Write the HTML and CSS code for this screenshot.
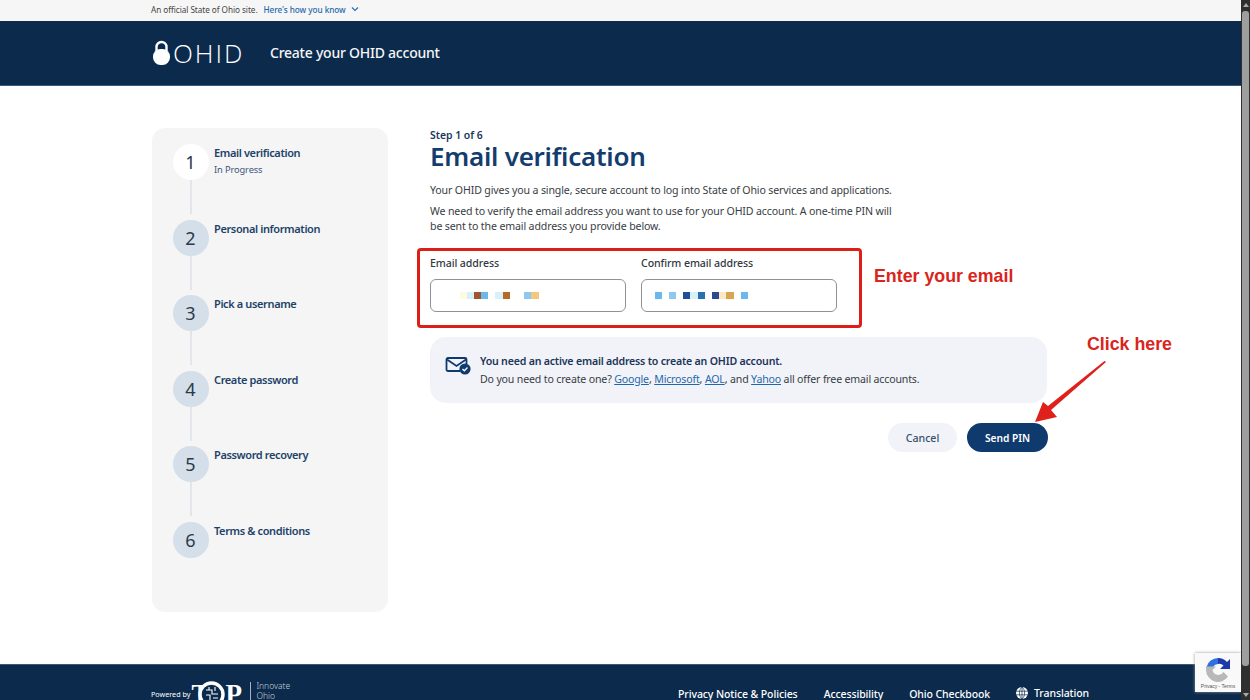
FILE: index.html
```html
<!DOCTYPE html>
<html lang="en">
<head>
<meta charset="utf-8">
<title>Create your OHID account</title>
<link rel="stylesheet" href="styles.css">
</head>
<body>
<div class="viewport">
  <div class="page">
    <div class="banner">
      <span class="banner-text">An official State of Ohio site.</span>
      <a class="banner-link">Here's how you know</a>
      <svg class="chevron" width="8" height="6" viewBox="0 0 8 6"><path d="M1 1.500 4 4.500 7 1.500" fill="none" stroke="#2a6fb0" stroke-width="1.200"/></svg>
    </div>
    <header class="header">
      <div class="logo">
        <svg class="lock" width="19" height="26" viewBox="0 0 19 26"><path d="M4.500 11V7a5 5 0 0 1 10 0v4" fill="none" stroke="#fff" stroke-width="2.400"/><rect x="1" y="9" width="17" height="16" rx="7.500" fill="#fff"/></svg>
        <span class="logo-text">OHID</span>
      </div>
      <div class="header-title">Create your OHID account</div>
    </header>
    <main class="main">
      <aside class="stepper">
        <div class="step step-current"><div class="step-marker"><div class="circle">1</div><div class="line"></div></div><div class="step-label"><div class="step-name">Email verification</div><div class="step-status">In Progress</div></div></div>
        <div class="step"><div class="step-marker"><div class="circle">2</div><div class="line"></div></div><div class="step-label"><div class="step-name">Personal information</div></div></div>
        <div class="step"><div class="step-marker"><div class="circle">3</div><div class="line"></div></div><div class="step-label"><div class="step-name">Pick a username</div></div></div>
        <div class="step"><div class="step-marker"><div class="circle">4</div><div class="line"></div></div><div class="step-label"><div class="step-name">Create password</div></div></div>
        <div class="step"><div class="step-marker"><div class="circle">5</div><div class="line"></div></div><div class="step-label"><div class="step-name">Password recovery</div></div></div>
        <div class="step"><div class="step-marker"><div class="circle">6</div></div><div class="step-label"><div class="step-name">Terms &amp; conditions</div></div></div>
      </aside>
      <section class="content">
        <div class="step-count">Step 1 of 6</div>
        <h1 class="title">Email verification</h1>
        <p class="intro">Your OHID gives you a single, secure account to log into State of Ohio services and applications.</p>
        <p class="intro intro-wrap">We need to verify the email address you want to use for your OHID account. A one-time PIN will be sent to the email address you provide below.</p>
        <div class="fields">
          <div class="field">
            <label class="field-label">Email address</label>
            <div class="input mask-a">
              <span class="c c1"></span><span class="c c2"></span><span class="c c3"></span><span class="c c4"></span><span class="c"></span><span class="c c2"></span><span class="c c5"></span><span class="c"></span><span class="c"></span><span class="c c6"></span><span class="c c7"></span>
            </div>
          </div>
          <div class="field">
            <label class="field-label">Confirm email address</label>
            <div class="input mask-b">
              <span class="c c4"></span><span class="c"></span><span class="c c6"></span><span class="c"></span><span class="c c8"></span><span class="c c2"></span><span class="c c9"></span><span class="c"></span><span class="c c10"></span><span class="c c11"></span><span class="c c12"></span><span class="c"></span><span class="c c4"></span>
            </div>
          </div>
        </div>
        <div class="callout">
          <svg class="mail-icon" width="26" height="18" viewBox="0 0 26 18"><path d="M15 14H3a1.500 1.500 0 0 1-1.500-1.500V2.500A1.500 1.500 0 0 1 3 1h17a1.500 1.500 0 0 1 1.500 1.500V7" fill="none" stroke="#0f3a6e" stroke-width="1.800"/><path d="M2 2.500 11.500 9 21 2.500" fill="none" stroke="#0f3a6e" stroke-width="1.800"/><circle cx="20" cy="12" r="5.600" fill="#0f3a6e"/><path d="M17.500 12l1.800 1.800 3.200-3.300" fill="none" stroke="#fff" stroke-width="1.300"/></svg>
          <div class="callout-body">
            <div class="callout-title">You need an active email address to create an OHID account.</div>
            <div class="callout-text">Do you need to create one? <a class="link">Google</a>, <a class="link">Microsoft</a>, <a class="link">AOL</a>, and <a class="link">Yahoo</a> all offer free email accounts.</div>
          </div>
        </div>
        <div class="actions">
          <button class="btn btn-cancel">Cancel</button>
          <button class="btn btn-primary">Send PIN</button>
        </div>
      </section>
    </main>
    <footer class="footer">
      <div class="powered">
        <span class="powered-by">Powered by</span>
        <span class="top-logo"><span class="top-t">T</span><svg class="top-o" width="27" height="27" viewBox="0 0 27 27"><circle cx="13.500" cy="13.500" r="11.500" fill="#0b2a4c" stroke="#fff" stroke-width="3.500"/><path d="M8 9h6v4h6M8 14h4v6M15 17h5M11 6v3M17 6v4" fill="none" stroke="#fff" stroke-width="1.100"/></svg><span>P</span></span>
        <span class="divider"></span>
        <span class="innovate">Innovate<br>Ohio</span>
      </div>
      <nav class="footer-nav">
        <a>Privacy Notice &amp; Policies</a>
        <a>Accessibility</a>
        <a>Ohio Checkbook</a>
        <a class="translate"><svg width="12" height="12" viewBox="0 0 12 12"><circle cx="6" cy="6" r="6" fill="#fff"/><path d="M0 4.200h12M0 7.800h12M6 0v12M6 0C2.500 3 2.500 9 6 12M6 0c3.500 3 3.500 9 0 12" fill="none" stroke="#0b2a4c" stroke-width=".7"/></svg>Translation</a>
      </nav>
    </footer>

    <div class="note-box"></div>
    <div class="note note-email">Enter your email</div>
    <div class="note note-click">Click here</div>
    <svg class="arrow" width="80" height="70" viewBox="0 0 80 70"><polygon points="75,1 73.500,0 17,45 12,41 4,61 26,56 20,49" fill="#e0201a"/></svg>
    <div class="recaptcha">
      <svg width="26" height="26" viewBox="0 0 26 26"><path d="M13 1A12 12 0 0 0 1.500 10H8A6 6 0 0 1 13 7Z" fill="#2f6fde"/><path d="M13 1a12 12 0 0 1 9 4l3-3v10H15l3.500-3.500A6 6 0 0 0 13 7Z" fill="#1c3aa9"/><path d="M1 13a12 12 0 0 0 22 6.500L18.500 15A6 6 0 0 1 7.500 13L11 9.500H1Z" fill="#b8b8b8"/></svg>
      <div class="recaptcha-text">Privacy - Terms</div>
    </div>
  </div>
  <div class="scrollbar">
    <div class="scroll-arrow-up"></div>
    <div class="scroll-thumb"></div>
    <div class="scroll-arrow-down"></div>
  </div>
</div>
</body>
</html>
```

FILE: styles.css
```css
* { box-sizing: border-box; }
html, body { margin: 0; height: 700px; overflow: hidden; }
body { font-family: "Noto Sans", "Open Sans", Arial, sans-serif; color: #33383f; background: #fff; }
.viewport { display: flex; height: 700px; }
.page { flex: 1; position: relative; display: flex; flex-direction: column; height: 700px; overflow: hidden; background: #fff; }

.banner { height: 21px; flex: none; display: flex; align-items: center; padding-left: 151px; background: #f6f6f6; font-size: 8.200px; letter-spacing: -0.05px; padding-bottom: 3px; }
.banner-text { color: #444; }
.banner-link { color: #1f68ad; font-weight: 500; margin-left: 6px; }
.chevron { margin-left: 5px; }

.header { height: 65px; flex: none; display: flex; align-items: center; padding-left: 152px; background: #0b2a4c; color: #fff; border-bottom: 1px solid #3a5a78; }
.logo { display: flex; align-items: center; width: 118px; }
.lock { margin-right: 2px; }
.logo-text { font-family: "Open Sans", sans-serif; font-weight: 300; font-size: 26px; letter-spacing: 2px; line-height: 30px; }
.header-title { font-size: 14px; letter-spacing: -0.24px; font-weight: 500; color: #f4f6f8; margin-top: -2px; }

.main { flex: 1; display: flex; padding: 42px 0 0 152px; min-height: 0; }
.stepper { width: 236px; height: 484px; flex: none; background: #f5f5f5; border-radius: 13px; padding: 16px 0 0 21px; }
.step { display: flex; height: 75.600px; }
.step-marker { width: 36px; flex: none; display: flex; flex-direction: column; align-items: center; }
.circle { width: 36px; height: 36px; flex: none; border-radius: 50%; background: #d5dfe9; display: flex; align-items: center; justify-content: center; font-size: 18px; color: #2a3a4a; padding-right: 1px; }
.step-current .circle { background: #fff; }
.line { width: 2px; height: 34px; background: #e2e5e9; }
.step-label { margin-left: 5px; padding-top: 1px; }
.step-name { font-size: 11px; letter-spacing: -0.38px; font-weight: 600; color: #1d4268; line-height: 16px; }
.step-status { font-size: 9.300px; letter-spacing: -0.12px; color: #3f5678; line-height: 16px; margin-top: 1px; }

.content { margin-left: 42px; width: 618px; }
.step-count { font-size: 10.400px; font-weight: 600; color: #1a3560; line-height: 14px; }
.title { margin: -1px 0 0; font-size: 26px; letter-spacing: -0.25px; font-weight: 600; color: #123d6e; line-height: 30px; }
.intro { margin: 0; font-size: 10.600px; letter-spacing: -0.14px; line-height: 15px; color: #383d44; }
.title + .intro { margin-top: 12px; }
.intro-wrap { margin-top: 6px; width: 470px; }
.fields { display: flex; gap: 15px; margin-top: 21px; }
.field { width: 196px; }
.field-label { display: block; font-size: 10.600px; letter-spacing: -0.1px; font-weight: 500; color: #33383f; line-height: 16px; margin-bottom: 8px; }
.input { height: 33px; border: 1.500px solid #8e9297; border-radius: 6px; display: flex; align-items: center; background: #fff; }
.mask-a { padding-left: 28.500px; }
.mask-b { padding-left: 12.500px; }
.c { width: 7.200px; height: 7px; flex: none; }
.c1 { background: #fdfbe0; }
.c2 { background: #d8f0fa; }
.c3 { background: #a0552f; }
.c4 { background: #6bb8ee; }
.c5 { background: #b46a24; }
.c6 { background: #8cc8f0; }
.c7 { background: #f4c67e; }
.c8 { background: #1f4f96; }
.c9 { background: #2a6fb0; }
.c10 { background: #2b4a92; }
.c11 { background: #fce8c4; }
.c12 { background: #daa550; }

.callout { margin-top: 25px; width: 617px; height: 66px; border-radius: 16px; background: #f1f3f8; display: flex; align-items: center; padding-left: 15px; }
.mail-icon { flex: none; margin: -8px 9px 0 0; }
.callout-title { font-size: 10.600px; letter-spacing: -0.2px; font-weight: 600; color: #1d3558; line-height: 18px; }
.callout-text { font-size: 10.600px; letter-spacing: -0.17px; color: #383d44; line-height: 18px; }
.link { color: #1f68ad; text-decoration: underline; }

.actions { display: flex; justify-content: flex-end; gap: 10px; margin-top: 20px; }
.btn { height: 29px; border: 0; border-radius: 15px; font-family: inherit; font-size: 10.200px; font-weight: 600; padding: 0; }
.btn-cancel { width: 69px; background: #f1f3f8; color: #33516f; font-weight: 500; font-size: 10.600px; }
.btn-primary { width: 81px; background: #0f3a6e; color: #fff; }

.footer { height: 36px; flex: none; display: flex; justify-content: space-between; padding-left: 151px; background: #0b2a4c; color: #fff; border-top: 1px solid #3a5a78; }
.powered { display: flex; align-items: flex-start; padding-top: 17px; }
.powered-by { font-size: 7.200px; margin: 7px 1px 0 0; }
.top-logo { display: flex; font-family: "Liberation Serif", serif; font-weight: 700; font-size: 27px; line-height: 25px; }
.top-t { margin-right: -11px; }
.top-o { margin: -1px 0 0; }
.divider { width: 1px; height: 24px; background: #9fb2c6; margin: 0 5.500px 0 8px; }
.innovate { font-size: 8.500px; line-height: 10px; font-weight: 300; color: #c4d0dc; margin-top: -1px; }
.footer-nav { display: flex; gap: 26px; padding: 21px 152px 0 0; font-size: 10.500px; letter-spacing: -0.1px; font-weight: 500; line-height: 16px; }
.translate { display: flex; align-items: center; gap: 6px; }

.note-box { position: absolute; left: 417px; top: 248px; width: 445px; height: 80px; border: 3px solid #dc1f18; border-radius: 4px; }
.note { position: absolute; font-family: "Liberation Sans", Arial, sans-serif; font-weight: 700; color: #d9251c; line-height: 20px; white-space: nowrap; }
.note-email { left: 874px; top: 266px; font-size: 17.800px; }
.note-click { left: 1087px; top: 334px; font-size: 17.800px; }
.arrow { position: absolute; left: 1031px; top: 361px; }

.recaptcha { position: absolute; right: 0; top: 653px; width: 46px; height: 39px; background: #f9f9f9; box-shadow: 0 0 3px #999; display: flex; flex-direction: column; align-items: center; padding-top: 4px; }
.recaptcha-text { font-family: "Liberation Sans", Arial, sans-serif; font-size: 5px; color: #555; line-height: 7px; white-space: nowrap; }

.scrollbar { width: 9px; flex: none; background: #2f2f2f; display: flex; flex-direction: column; align-items: center; }
.scroll-arrow-up { width: 0; height: 0; margin: 3px 0 4px; border: 3px solid transparent; border-top: 0; border-bottom: 4px solid #aaa; }
.scroll-thumb { width: 7px; flex: 1; max-height: 655px; background: #9e9e9e; border-radius: 3px; }
.scroll-arrow-down { width: 0; height: 0; margin-top: auto; margin-bottom: 3px; border: 3px solid transparent; border-bottom: 0; border-top: 4px solid #aaa; }
```
